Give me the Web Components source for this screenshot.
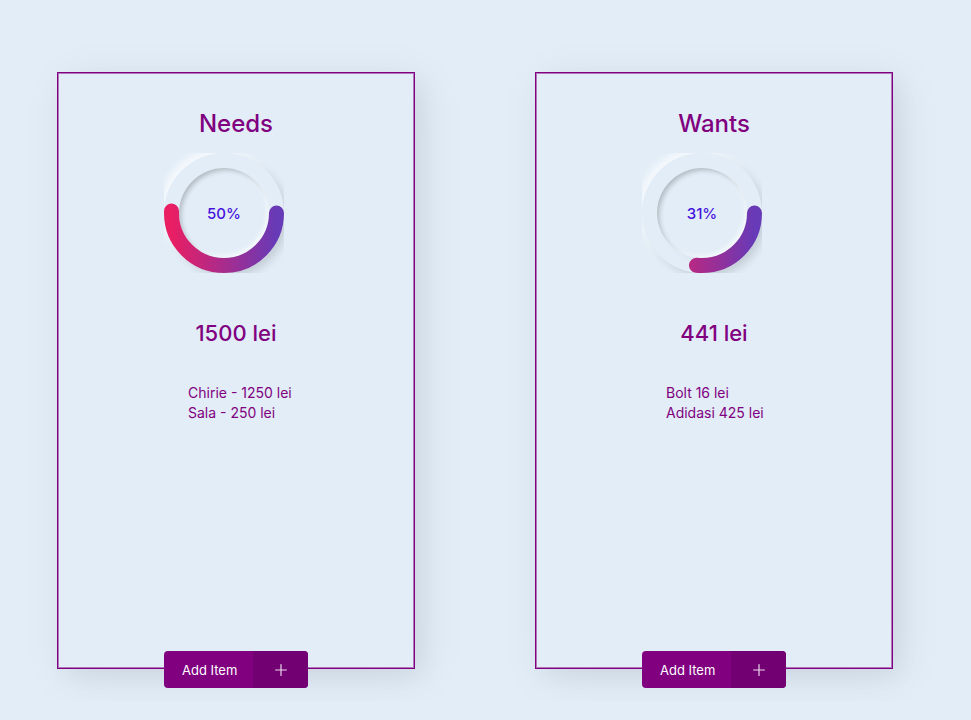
<!DOCTYPE html>
<html lang="ro">
<head>
<meta charset="utf-8">
<meta name="viewport" content="width=device-width, initial-scale=1">
<title>Budget</title>
<style>
html, body { margin: 0; min-height: 100%; background: #e2edf7; }
body { font-family: Inter, "Open Sans", sans-serif; color: #800080; }
</style>
</head>
<body>
<budget-board>
  <budget-card heading="Needs" amount="1500 lei" percent="50%" arc="50.6">
    <li>Chirie - 1250 lei</li>
    <li>Sala - 250 lei</li>
  </budget-card>
  <budget-card heading="Wants" amount="441 lei" percent="31%" arc="26.7">
    <li>Bolt 16 lei</li>
    <li>Adidasi 425 lei</li>
  </budget-card>
</budget-board>

<template id="board-template">
  <style>
    :host { display: block; }
    main {
      display: grid;
      grid-template-columns: repeat(auto-fit, minmax(260px, 1fr));
      gap: 72px 120px;
      padding: 72px 78px 32px 57px;
    }
  </style>
  <main><slot></slot></main>
</template>

<template id="card-template">
  <style>
    :host { display: block; }
    article {
      box-sizing: border-box;
      min-height: 597px;
      height: 100%;
      display: flex;
      flex-direction: column;
      align-items: center;
      padding-top: 35px;
      border: 1px solid #800080;
      box-shadow: inset 0 0 0 1px rgba(128, 0, 128, .5),
        8px 8px 20px rgba(0, 0, 0, .04), 8px 8px 44px rgba(0, 0, 0, .07);
    }
    h2 { margin: 0; font-size: 24px; line-height: 32px; font-weight: 500; }
    .body { width: 144px; display: flex; flex-direction: column; }
    progress-ring { margin-top: 13px; }
    .amount { margin: 44px 0 0; text-align: center; font-size: 22px; line-height: 32px; font-weight: 500; }
    ul { margin: 34px 0 0; padding: 0 0 0 24px; list-style: none; font-size: 14px; line-height: 20px; white-space: nowrap; }
    add-button { margin-top: auto; margin-bottom: -20px; }
  </style>
  <article>
    <h2></h2>
    <div class="body">
      <progress-ring></progress-ring>
      <p class="amount"></p>
      <ul><slot></slot></ul>
    </div>
    <add-button>Add Item</add-button>
  </article>
</template>

<template id="ring-template">
  <style>
    :host { display: block; width: 120px; height: 120px; overflow: hidden; }
    .frame { display: grid; width: 120px; height: 120px; }
    .outer, svg { grid-area: 1 / 1; }
    .outer {
      box-sizing: border-box;
      padding: 15px;
      border-radius: 50%;
      box-shadow: 5px 5px 8px -1px rgba(0, 0, 0, .13), -5px -5px 8px -1px rgba(255, 255, 255, .7);
    }
    .inner {
      height: 90px;
      display: flex;
      align-items: center;
      justify-content: center;
      border-radius: 50%;
      box-shadow: inset 3px 3px 5px -1px rgba(0, 0, 0, .22), inset -3px -3px 5px -1px rgba(255, 255, 255, .7),
        0 0 1px rgba(255, 255, 255, .8), 0 9px 8px -8px rgba(0, 0, 0, .05);
      color: #4614dc;
      font-size: 15px;
      font-weight: 500;
    }
    circle { fill: none; stroke: url(#tone); stroke-width: 15; stroke-linecap: round; }
  </style>
  <div class="frame">
    <div class="outer"><div class="inner"></div></div>
    <svg width="120" height="120" viewBox="0 0 120 120" aria-hidden="true">
      <defs>
        <linearGradient id="tone">
          <stop offset="0%" stop-color="#e91e63"/>
          <stop offset="100%" stop-color="#673ab7"/>
        </linearGradient>
      </defs>
      <circle cx="60" cy="60" r="52.5" pathLength="100"/>
    </svg>
  </div>
</template>

<template id="button-template">
  <style>
    :host { display: block; }
    button {
      display: flex;
      align-items: stretch;
      width: 144px;
      height: 37px;
      padding: 0;
      border: 0;
      border-radius: 4px;
      overflow: hidden;
      background: #800080;
      color: #fff;
      font: inherit;
      font-size: 13px;
      cursor: pointer;
    }
    .label { flex: 1; display: flex; align-items: center; padding-left: 18px; white-space: nowrap; }
    .icon { width: 55px; display: flex; align-items: center; justify-content: center; background: #730073; }
  </style>
  <button type="button">
    <span class="label"><slot></slot></span>
    <span class="icon">
      <svg width="12" height="12" viewBox="0 0 12 12" fill="none" stroke="#fff" stroke-opacity=".85" stroke-width="1.2" stroke-linecap="round" aria-hidden="true"><path d="M6 .6v10.8M.6 6h10.8"/></svg>
    </span>
  </button>
</template>

<script>
class TemplateElement extends HTMLElement {
  constructor() {
    super();
    const template = document.getElementById(this.constructor.template);
    this.attachShadow({ mode: "open" }).append(template.content.cloneNode(true));
  }
}

class ProgressRing extends TemplateElement {
  static template = "ring-template";
  static observedAttributes = ["label", "arc"];
  attributeChangedCallback(name, previous, value) {
    if (name === "label") this.shadowRoot.querySelector(".inner").textContent = value;
    else this.shadowRoot.querySelector("circle").setAttribute("stroke-dasharray", value + " 100");
  }
}

class AddButton extends TemplateElement {
  static template = "button-template";
}

class BudgetCard extends TemplateElement {
  static template = "card-template";
  connectedCallback() {
    const root = this.shadowRoot;
    root.querySelector("h2").textContent = this.getAttribute("heading");
    root.querySelector(".amount").textContent = this.getAttribute("amount");
    const ring = root.querySelector("progress-ring");
    ring.setAttribute("label", this.getAttribute("percent"));
    ring.setAttribute("arc", this.getAttribute("arc"));
  }
}

class BudgetBoard extends TemplateElement {
  static template = "board-template";
}

customElements.define("progress-ring", ProgressRing);
customElements.define("add-button", AddButton);
customElements.define("budget-card", BudgetCard);
customElements.define("budget-board", BudgetBoard);
</script>
</body>
</html>
